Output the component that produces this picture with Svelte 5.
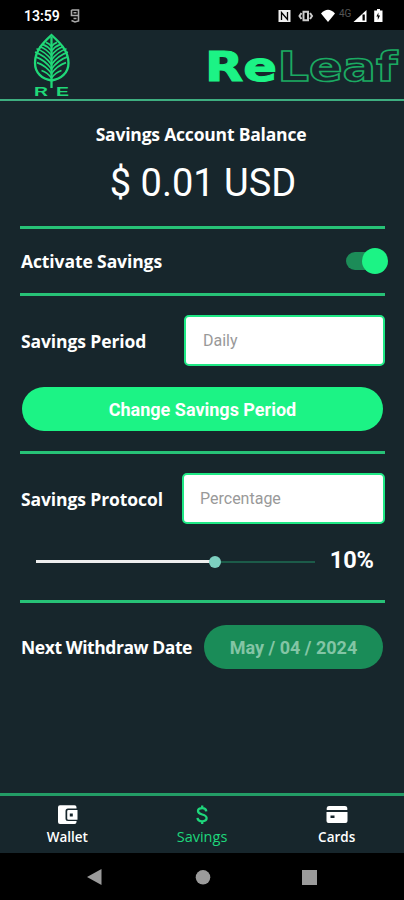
<script>
	let active = $state(true);
	let period = $state('');
	let protocol = $state('');
	let percent = $state(10);
	let tab = $state('Savings');

	const tabs = ['Wallet', 'Savings', 'Cards'];
	const veins = [
		{ y: 46, w: 10 },
		{ y: 41.5, w: 14.5 },
		{ y: 37, w: 16.5 },
		{ y: 32.5, w: 16.5 },
		{ y: 28, w: 15 },
		{ y: 23.5, w: 12 },
		{ y: 19, w: 8.5 },
		{ y: 14.5, w: 5.5 }
	];

	// the slider tops out a little above 15%
	let fill = $derived((percent / 15.6) * 100);
</script>

<div class="phone">
	<div class="status-bar">
		<span class="clock">13:59</span>
		<svg class="app-glyph" width="10" height="14" viewBox="0 0 10 14">
			<path d="M1.500 1h7v11l-3.500 1-3.500-1.500M1.500 1v5.500h7M3.500 3.700h3M3.500 9.500h3" />
		</svg>
		<svg class="status-icons" width="106" height="16" viewBox="0 0 106 16">
			<path fill="#eee" d="M0.500 2h12v12h-12z" />
			<path class="cut" d="M3.500 12V4.500l6 7V4" />
			<path class="ring" d="M25.500 3.800h4.500v8.400h-4.500z" />
			<path class="ring" d="M23.500 5 21.500 8l2 3M32 5l2 3-2 3" />
			<path fill="#fff" d="M43 5.500Q50 -2 57 5.500L50 14z" />
			<text x="61" y="9">4G</text>
			<path fill="#fff" d="M75.500 14 88.500 2v12z" />
			<path fill="#000" d="M84.500 6.500h2.300V12.500h-2.300z" />
			<path fill="#fff" d="M97 2.500h2V1h3v1.500h2.500V14H96.200V2.500z" />
			<path fill="#000" d="m100.400 4.500-2 4h1.400V12l2.300-4.500h-1.700z" />
		</svg>
	</div>

	<header>
		<svg class="leaf" width="42" height="67" viewBox="0 0 42 67">
			<path class="outline" d="M20.500 3C13 10 4 18 4 31c0 10 7 16 16.500 17.500C30 47 37.500 41 37.500 31 37.500 18 28 10 20.500 3z" />
			<path class="outline" d="M20.500 5v51" />
			{#each veins as { y, w }}
				<path class="vein" d="M20.500 {y}Q{20.5 - w * 0.4} {y - w * 0.55} {20.5 - w} {y - w * 0.75}M20.500 {y}Q{20.5 + w * 0.4} {y - w * 0.55} {20.5 + w} {y - w * 0.75}" />
			{/each}
			<text x="3" y="63.500" textLength="14" lengthAdjust="spacingAndGlyphs">R</text>
			<text x="25" y="63.500" textLength="13" lengthAdjust="spacingAndGlyphs">E</text>
		</svg>
		<svg class="wordmark" width="198" height="54" viewBox="0 0 198 54">
			<text class="solid" x="-1" y="42" textLength="72" lengthAdjust="spacingAndGlyphs">Re</text>
			<text class="hollow" x="71.500" y="42" textLength="120" lengthAdjust="spacingAndGlyphs">Leaf</text>
		</svg>
	</header>

	<main>
		<section class="balance">
			<h2>Savings Account Balance</h2>
			<p>$ 0.01 USD</p>
		</section>

		<section class="row activate">
			<h2>Activate Savings</h2>
			<button class="toggle" class:active aria-label="Activate Savings" onclick={() => (active = !active)}>
				<span class="thumb"></span>
			</button>
		</section>

		<section class="period">
			<div class="row">
				<h2>Savings Period</h2>
				<input class="field" placeholder="Daily" bind:value={period} />
			</div>
			<button class="pill">Change Savings Period</button>
		</section>

		<section class="protocol">
			<div class="row">
				<h2>Savings Protocol</h2>
				<input class="field wide" placeholder="Percentage" bind:value={protocol} />
			</div>
			<div class="slider">
				<div class="track">
					<div class="filled" style="width: {fill}%"></div>
					<div class="knob"></div>
					<div class="rest"></div>
				</div>
				<strong>{percent}%</strong>
			</div>
		</section>

		<section class="row withdraw">
			<h2>Next Withdraw Date</h2>
			<button class="pill date" disabled>May / 04 / 2024</button>
		</section>
	</main>

	<nav>
		{#each tabs as name}
			<button class="tab" class:current={tab === name} onclick={() => (tab = name)}>
				<svg width="24" height="22" viewBox="0 0 24 22">
					{#if name === 'Wallet'}
						<path fill="currentColor" d="M5 1.200h14.500q2 0 2 2v1.300h-8.500q-2.500 0-2.500 2.500v7.500q0 2.500 2.500 2.500h8.500v1q0 2-2 2H5q-2 0-2-2v-14.800q0-2 2-2z" />
						<path fill="currentColor" fill-rule="evenodd" d="M13.500 6h9v9.700h-9q-1.300 0-1.300-1.300V7.300q0-1.300 1.300-1.300zM14.800 9.500v3h3v-3z" />
					{:else if name === 'Savings'}
						<path class="dollar" d="M16.300 7.300C16 5 14.300 4.100 12.200 4.100 9.800 4.100 8 5.200 8 7.100c0 4.500 8.600 2.300 8.600 7 0 2-2 3.200-4.500 3.200-2.600 0-4.400-1.200-4.600-3.400M12.200 1.500v2.600M12.200 17.300v2.600" />
					{:else}
						<path fill="currentColor" d="M4 2h16q2 0 2.300 2v2H1.700V4Q2 2 4 2z" />
						<path fill="currentColor" fill-rule="evenodd" d="M1.500 8h21v9q0 2-2 2h-17q-2 0-2-2zM5.500 11.500V14h4v-2.500z" />
					{/if}
				</svg>
				<span>{name}</span>
			</button>
		{/each}
	</nav>

	<div class="system-bar">
		<svg width="404" height="47" viewBox="0 0 404 47">
			<path d="M87 24 101.500 16v16z" />
			<circle cx="203" cy="24.300" r="7.300" />
			<path d="M302 17h15v15h-15z" />
		</svg>
	</div>
</div>

<style>
	:global(body) {
		background: #000;
	}

	.phone {
		width: 404px;
		height: 900px;
		display: flex;
		flex-direction: column;
		overflow: hidden;
		background: #17262c;
		color: #fff;
		font-family: Roboto, sans-serif;
	}

	button {
		border: none;
		padding: 0;
		font-family: inherit;
	}

	.status-bar {
		height: 30px;
		flex: none;
		display: flex;
		align-items: center;
		background: #000;
	}

	.clock {
		width: 46px;
		margin-left: 24px;
		padding-top: 2px;
		font-size: 14px;
		font-weight: 600;
	}

	.app-glyph {
		margin-top: 2px;
		fill: none;
		stroke: #aaa;
		stroke-width: 1.6;
	}

	.status-icons {
		margin-left: 198px;
		margin-top: 2px;
	}

	.status-icons text {
		font-size: 10px;
		fill: #555;
	}

	.cut {
		fill: none;
		stroke: #000;
		stroke-width: 1.3;
	}

	.ring {
		fill: none;
		stroke: #ccc;
		stroke-width: 2;
	}

	header {
		height: 69px;
		flex: none;
		display: flex;
		justify-content: space-between;
		padding: 0 0 0 31px;
		border-bottom: 2px solid #3eae80;
	}

	.leaf {
		margin-top: 2px;
	}

	.outline,
	.vein {
		fill: none;
		stroke: #20d878;
		stroke-width: 2.3;
	}

	.vein {
		stroke-width: 1.6;
	}

	.leaf text {
		font-family: "Liberation Sans", sans-serif;
		font-size: 13px;
		font-weight: 700;
		fill: #20d878;
	}

	.wordmark {
		margin-top: 9px;
		overflow: visible;
	}

	.wordmark text {
		font-family: "DejaVu Sans", sans-serif;
		font-size: 40px;
		font-weight: 700;
	}

	.solid {
		fill: #1cf385;
		stroke: #1cf385;
	}

	.hollow {
		fill: none;
		stroke: #1baa62;
		stroke-width: 1.5;
	}

	main {
		flex: 1;
		padding: 1px 19px 0 20px;
	}

	section {
		border-bottom: 3px solid #27c277;
		box-sizing: border-box;
	}

	h2 {
		margin: 0 0 0 1px;
		font-family: "Open Sans", sans-serif;
		font-size: 17.5px;
		font-weight: 700;
		line-height: 24px;
		letter-spacing: -0.1px;
		white-space: nowrap;
	}

	.row {
		display: flex;
		align-items: center;
		justify-content: space-between;
	}

	.balance {
		height: 127px;
		padding-top: 20px;
		text-align: center;
	}

	.balance h2 {
		margin-right: 4px;
		letter-spacing: -0.2px;
	}

	.balance p {
		margin: 13px 0 0 1px;
		font-size: 38px;
		line-height: 48px;
	}

	.activate {
		height: 67px;
	}

	.toggle {
		width: 35px;
		height: 18px;
		display: flex;
		align-items: center;
		margin-right: 4.5px;
		border-radius: 9px;
		background: #1c8c58;
	}

	.thumb {
		flex: none;
		width: 26px;
		height: 26px;
		border-radius: 50%;
		background: #ccc;
	}

	.active .thumb {
		margin-left: 16px;
		background: #1cf385;
	}

	.period {
		height: 158px;
		padding-top: 19px;
	}

	.field {
		width: 201px;
		height: 51px;
		box-sizing: border-box;
		padding: 0 17px;
		border: 2px solid #1fe885;
		border-radius: 5px;
		background: #fff;
		font-family: Roboto, sans-serif;
		font-size: 16px;
	}

	.field::placeholder {
		color: #999;
	}

	.field.wide {
		width: 203px;
		padding: 0 16px;
	}

	.pill {
		display: block;
		width: 361px;
		height: 44px;
		margin: 21px 0 0 2px;
		border-radius: 22px;
		background: #1cf385;
		color: #fff;
		font-size: 18px;
		font-weight: 700;
	}

	.protocol {
		height: 149px;
		padding-top: 19px;
	}

	.slider {
		display: flex;
		align-items: center;
		justify-content: space-between;
		margin-top: 22px;
		padding: 0 11px 0 16px;
	}

	.track {
		width: 279px;
		display: flex;
		align-items: center;
		margin-top: 3px;
	}

	.filled {
		height: 3px;
		background: #eee;
	}

	.knob {
		flex: none;
		width: 12px;
		height: 12px;
		margin: 0 -6px;
		border-radius: 50%;
		background: #7dcfc0;
		z-index: 1;
	}

	.rest {
		flex: 1;
		height: 2px;
		background: #1c5b49;
	}

	.slider strong {
		font-size: 23.5px;
		line-height: 28px;
	}

	.withdraw {
		height: 88px;
		border: none;
	}

	.withdraw h2 {
		letter-spacing: -0.43px;
	}

	.date {
		width: 179px;
		margin: 0 2px 0 0;
		background: #1a8c58;
		color: #83c5a5;
	}

	nav {
		height: 57px;
		flex: none;
		display: flex;
		border-top: 3px solid #239c66;
	}

	.tab {
		flex: 1;
		display: flex;
		flex-direction: column;
		align-items: center;
		padding-top: 8px;
		background: none;
		color: #fff;
		font-family: "Open Sans", sans-serif;
		font-size: 13.5px;
		font-weight: 600;
		line-height: 22px;
	}

	.current {
		color: #1ed67b;
		font-size: 14.5px;
		font-weight: 400;
	}

	.tab svg {
		flex: none;
	}

	.dollar {
		fill: none;
		stroke: currentColor;
		stroke-width: 2.3;
	}

	.system-bar {
		height: 47px;
		flex: none;
		background: #000;
		fill: #9b9b9b;
	}
</style>
